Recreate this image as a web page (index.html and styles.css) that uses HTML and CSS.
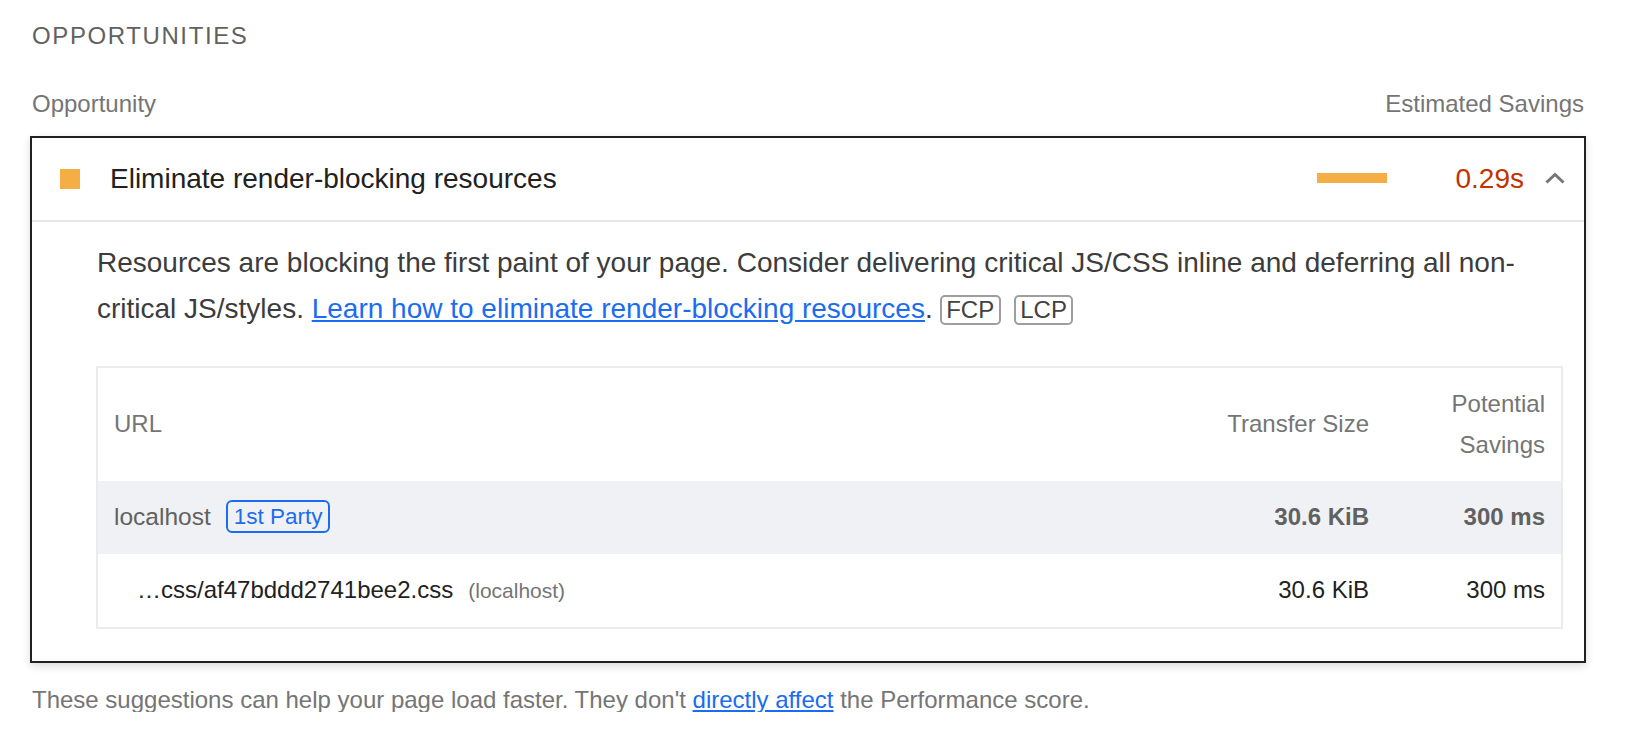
FILE: index.html
```
<!DOCTYPE html>
<html lang="en">
<head>
<meta charset="utf-8">
<title>Opportunities</title>
<link rel="stylesheet" href="styles.css">
</head>
<body>
<section class="group">
  <h2 class="group-title">Opportunities</h2>
  <div class="col-heads">
    <span>Opportunity</span>
    <span>Estimated Savings</span>
  </div>
  <div class="audit">
    <div class="audit-head">
      <span class="score-icon"></span>
      <span class="audit-title">Eliminate render-blocking resources</span>
      <span class="sparkbar"></span>
      <span class="savings">0.29s</span>
      <svg class="chevron" width="22" height="14" viewBox="0 0 22 14" aria-hidden="true">
        <polyline points="2.5,11.5 11,3.5 19.5,11.5" fill="none" stroke="#757575" stroke-width="3"/>
      </svg>
    </div>
    <div class="audit-body">
      <p class="description">Resources are blocking the first paint of your page. Consider delivering critical JS/CSS inline and deferring all non-critical JS/styles. <a href="#" class="link">Learn how to eliminate render-blocking resources</a>.<span class="adorn adorn-first">FCP</span><span class="adorn adorn-next">LCP</span></p>
      <table class="details">
        <colgroup>
          <col>
          <col class="col-num">
          <col class="col-num">
        </colgroup>
        <thead>
          <tr>
            <th class="th-url">URL</th>
            <th class="th-num nowrap">Transfer Size</th>
            <th class="th-num">Potential Savings</th>
          </tr>
        </thead>
        <tbody>
          <tr class="row-group">
            <td class="cell-url"><span class="entity">localhost</span><span class="tag">1st Party</span></td>
            <td class="cell-num">30.6 KiB</td>
            <td class="cell-num">300 ms</td>
          </tr>
          <tr class="row-sub">
            <td class="cell-url sub"><span class="url-path">…css/af47bddd2741bee2.css</span><span class="url-host">(localhost)</span></td>
            <td class="cell-num">30.6 KiB</td>
            <td class="cell-num">300 ms</td>
          </tr>
        </tbody>
      </table>
    </div>
  </div>
  <p class="footer-note">These suggestions can help your page load faster. They don't <a href="#" class="link">directly affect</a> the Performance score.</p>
</section>
</body>
</html>
```
FILE: styles.css
```
html, body {
  margin: 0;
  padding: 0;
  background: #ffffff;
}

body {
  font-family: "Liberation Sans", Arial, Helvetica, sans-serif;
  color: #212121;
}

.group {
  width: 1556px;
  margin-left: 30px;
  padding-top: 24px;
}

.group-title {
  margin: 0 0 0 2px;
  font-size: 24px;
  line-height: 24px;
  font-weight: normal;
  text-transform: uppercase;
  letter-spacing: 1.6px;
  color: #616161;
}

.col-heads {
  display: flex;
  justify-content: space-between;
  margin: 44px 0 0 0;
  padding: 0 2px;
  font-size: 24px;
  line-height: 24px;
  color: #757575;
}

.audit {
  margin-top: 20px;
  border: 2px solid #212121;
  box-shadow: 0 3px 8px rgba(0, 0, 0, 0.14);
}

.audit-head {
  display: flex;
  align-items: center;
  height: 82px;
  padding: 0 18px 0 28px;
  border-bottom: 2px solid #e8e8e8;
}

.score-icon {
  width: 20px;
  height: 20px;
  background: #f5ad45;
  flex: none;
  margin-top: -1px;
}

.audit-title {
  flex: 1;
  margin-left: 30px;
  font-size: 28px;
  line-height: 32px;
  color: #212121;
}

.sparkbar {
  width: 70px;
  height: 10px;
  background: #f5ad45;
  flex: none;
  margin-top: -2px;
}

.savings {
  margin-left: 69px;
  font-size: 28px;
  line-height: 32px;
  color: #c33300;
}

.chevron {
  margin-left: 20px;
  margin-top: -2px;
  flex: none;
}

.audit-body {
  padding: 18px 21px 32px 64px;
}

.description {
  margin: 0 0 0 1px;
  font-size: 28px;
  line-height: 46px;
  color: #3c3c3c;
}

.link {
  color: #1a6cf0;
  text-decoration: underline;
}

.adorn {
  display: inline-block;
  border: 2px solid #9e9e9e;
  border-radius: 5px;
  padding: 0 4.5px;
  font-size: 24px;
  line-height: 26px;
  color: #424242;
}

.adorn-first {
  margin-left: 7px;
}

.adorn-next {
  margin-left: 13px;
}

.details {
  width: 100%;
  margin-top: 34px;
  border: 2px solid #ebebeb;
  border-collapse: separate;
  border-spacing: 0;
  table-layout: fixed;
  font-size: 24px;
}

.col-num {
  width: 176px;
}

.details th,
.details td {
  padding: 16px;
  line-height: 40.5px;
  vertical-align: middle;
}

.details th {
  font-weight: normal;
  color: #757575;
}

.th-url {
  text-align: left;
}

.th-num {
  text-align: right;
}

.nowrap {
  white-space: nowrap;
}

.row-group td {
  background: #f0f1f4;
  color: #616161;
}

.row-group .cell-num {
  font-weight: bold;
}

.cell-url {
  text-align: left;
  white-space: nowrap;
}

.cell-num {
  text-align: right;
  color: #212121;
}

.sub {
  padding-left: 39px !important;
}

.entity {
  font-size: 24.5px;
  color: #616161;
}

.tag {
  display: inline-block;
  margin-left: 15px;
  padding: 0 6px;
  border: 2px solid #1a6cf0;
  border-radius: 6px;
  font-size: 22.5px;
  line-height: 29px;
  color: #1a6cf0;
  vertical-align: 1px;
}

.url-path {
  color: #212121;
}

.url-host {
  margin-left: 15px;
  font-size: 21px;
  color: #757575;
}

.footer-note {
  margin: 25px 0 0 2px;
  font-size: 24px;
  line-height: 24px;
  color: #757575;
}
```
